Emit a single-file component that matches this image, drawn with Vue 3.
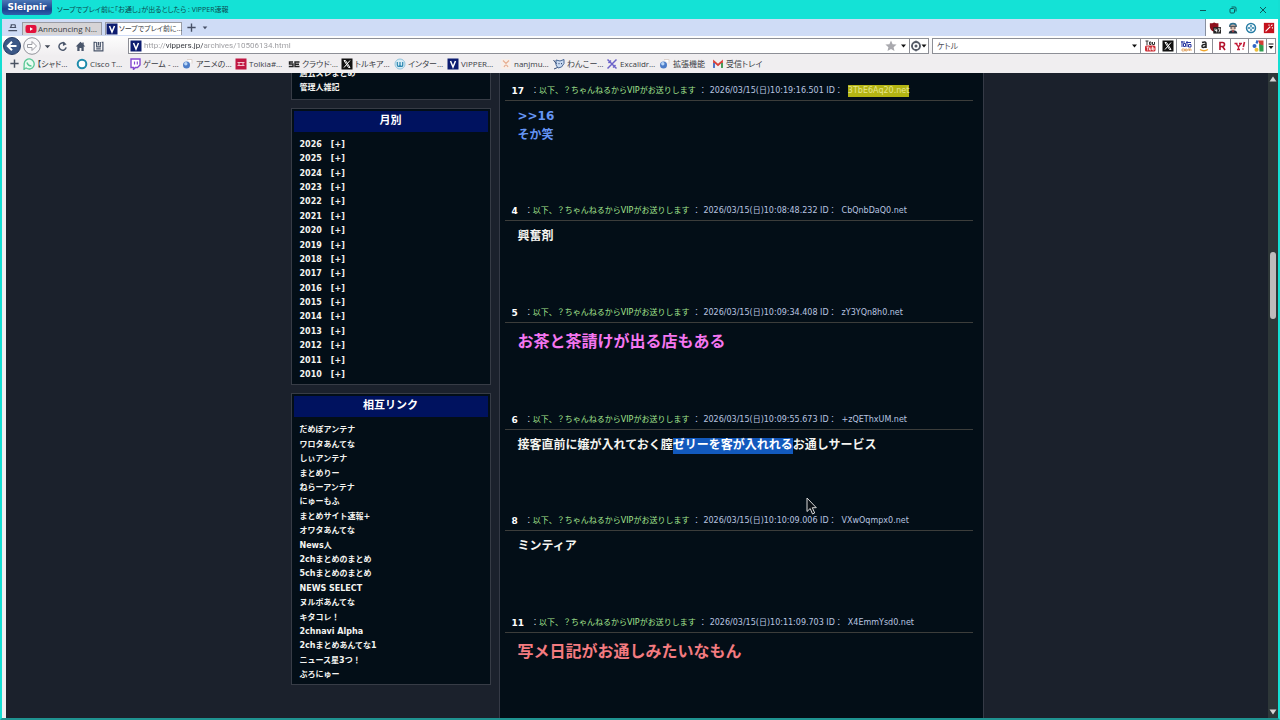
<script setup>
import { ref } from 'vue'

const url = ref('http://vippers.jp/archives/10506134.html')
const query = ref('ケトル')

const bookmarks = [
  { icon: 'line', text: '【シャド…' },
  { icon: 'ring', text: 'Cisco T…' },
  { icon: 'twitch', text: 'ゲーム - …' },
  { icon: 'orb', text: 'アニメの…' },
  { icon: 'tolkia', text: 'Tolkia#…' },
  { icon: 'se', text: 'クラウド·…' },
  { icon: 'x', text: 'トルキア…' },
  { icon: 'w', text: 'インター…' },
  { icon: 'v', text: 'VIPPER…' },
  { icon: 'nan', text: 'nanjmu…' },
  { icon: 'dog', text: 'わんこー…' },
  { icon: 'excali', text: 'Excalidr…' },
  { icon: 'orb', text: '拡張機能' },
  { icon: 'gmail', text: '受信トレイ' },
]

const years = Array.from({ length: 17 }, (_, i) => 2026 - i)

const links = [
  'だめぽアンテナ', 'ワロタあんてな', 'しぃアンテナ', 'まとめりー', 'ねらーアンテナ',
  'にゅーもふ', 'まとめサイト速報+', 'オワタあんてな', 'News人', '2chまとめのまとめ',
  '5chまとめのまとめ', 'NEWS SELECT', 'ヌルポあんてな', 'キタコレ！', '2chnavi Alpha',
  '2chまとめあんてな1', 'ニュース星3つ！', 'ぶろにゅー',
]

const posts = [
  { no: 17, time: '2026/03/15(日)10:19:16.501', id: '3TbE6Aq20.net', hit: true, tone: 'blue', lines: [['>>16'], ['そか笑']] },
  { no: 4, time: '2026/03/15(日)10:08:48.232', id: 'CbQnbDaQ0.net', tone: 'plain', lines: [['興奮剤']] },
  { no: 5, time: '2026/03/15(日)10:09:34.408', id: 'zY3YQn8h0.net', tone: 'pink', lines: [['お茶と茶請けが出る店もある']] },
  { no: 6, time: '2026/03/15(日)10:09:55.673', id: '+zQEThxUM.net', tone: 'plain', lines: [['接客直前に嬢が入れておく膣', 'ゼリーを客が入れれる', 'お通しサービス']] },
  { no: 8, time: '2026/03/15(日)10:10:09.006', id: 'VXwOqmpx0.net', tone: 'plain', lines: [['ミンティア']] },
  { no: 11, time: '2026/03/15(日)10:11:09.703', id: 'X4EmmYsd0.net', tone: 'salmon', lines: [['写メ日記がお通しみたいなもん']] },
]
</script>

<template>
  <div class="window">
    <header class="titlebar">
      <button class="brand">Sleipnir</button>
      <span class="title">ソープでプレイ前に「お通し」が出るとしたら : VIPPER速報</span>
      <div class="controls">
        <button aria-label="最小化"><svg viewBox="0 0 10 10"><path d="M2 5.5h6" /></svg></button>
        <button aria-label="元に戻す"><svg viewBox="0 0 10 10"><rect x="2" y="3.5" width="4.5" height="4.5" rx="1" /><path d="M3.5 2h3.5a1 1 0 0 1 1 1v3.500" /></svg></button>
        <button aria-label="閉じる"><svg viewBox="0 0 10 10"><path d="M2 2l6 6M8 2l-6 6" /></svg></button>
      </div>
    </header>

    <div class="tabrow">
      <nav class="tabs">
        <button class="tool" aria-label="タブ一覧"><svg viewBox="0 0 12 12"><path d="M4 3h5M3 6h7M1.500 9.500h9.500M5 3l-1 3M9 3v3" stroke="#475066" stroke-width="1.300" fill="none" /></svg></button>
        <button class="tab">
          <svg class="ico" viewBox="0 0 12 12"><rect x="0.500" y="2" width="11" height="8" rx="2" fill="#e3103c" /><path d="M5 4.300v3.400l3-1.700z" fill="#fff" /></svg>
          <span>Announcing N…</span>
        </button>
        <button class="tab active">
          <svg class="ico" viewBox="0 0 12 12"><rect x="0.500" y="0.500" width="11" height="11" fill="#0c1c70" /><path d="M3.500 3l2.500 6 2.500-6" stroke="#fff" stroke-width="1.500" fill="none" /></svg>
          <span>ソープでプレイ前に…</span>
        </button>
        <button class="tool" aria-label="新しいタブ"><svg viewBox="0 0 12 12"><path d="M6 1.500v9M1.500 6h9" stroke="#475066" stroke-width="1.500" /></svg></button>
        <button class="tool slim" aria-label="タブメニュー"><svg viewBox="0 0 8 12"><path d="M1.500 5h5l-2.500 3z" fill="#475066" /></svg></button>
      </nav>
      <div class="extensions">
        <button aria-label="ブロッカー"><svg viewBox="0 0 14 14"><path d="M1 1.500q3 0 5-1 2 1 5 1v4q0 4-5 6-5-2-5-6z" fill="#8d101d" /><rect x="5" y="6" width="9" height="7.500" fill="#222" /><path d="M7 7.500v2.500h2.500M9 8v4M10.500 8H13l-1.500 4" stroke="#fff" fill="none" /></svg></button>
        <button aria-label="プロフィール"><svg viewBox="0 0 14 14"><path d="M2.500 5q0-4 4.500-4t4.500 4z" fill="#2d6f8e" /><circle cx="7" cy="6.500" r="3.500" fill="#e6c3b2" /><path d="M2.500 5h9M4 7h2M8 7h2" stroke="#223442" stroke-width="1.300" /><path d="M2 13.500q0-4 5-4t5 4z" fill="#233442" /><path d="M5.500 10h3L7 12.500z" fill="#c44" /></svg></button>
        <button aria-label="ターゲット"><svg viewBox="0 0 14 14"><circle cx="7" cy="7" r="5.200" fill="#f4fbfe" stroke="#287da4" stroke-width="1.800" /><path d="M7 3.500v2.500M7 8v2.500M3.500 7h2.500M8 7h2.500" stroke="#287da4" stroke-width="1.600" /></svg></button>
        <button aria-label="マジック"><svg viewBox="0 0 14 14"><rect x="1" y="1" width="12" height="12" fill="#c4121d" /><path d="M3 11l5.500-5.500M9.500 4.500L11 3M7 3v1.500M11 6v1.500" stroke="#fff" stroke-width="1.300" /></svg></button>
      </div>
    </div>

    <div class="toolbar">
      <button class="back" aria-label="戻る"><svg viewBox="0 0 18 18"><circle cx="9" cy="9" r="8.500" fill="#3b5786" stroke="#263c64" /><path d="M13.500 9H5.500M9 4.800L4.800 9 9 13.200" stroke="#fff" stroke-width="2" fill="none" /></svg></button>
      <button class="back" aria-label="進む"><svg viewBox="0 0 18 18"><circle cx="9" cy="9" r="8.300" fill="#f8f8fa" stroke="#92939b" /><path d="M4.500 7.500h4.500V4.500L13.500 9 9 13.500v-3H4.500z" stroke="#9b9ca3" fill="#fff" /></svg></button>
      <button class="nav" aria-label="履歴"><svg viewBox="0 0 12 12"><path d="M3 4.500h6L6 8z" fill="#424956" /></svg></button>
      <button class="nav wide" aria-label="更新"><svg viewBox="0 0 12 12"><path d="M8.500 2.800A4 4 0 1 0 10 7" fill="none" stroke="#4a566b" stroke-width="1.600" /><path d="M6.500 0.500L10.500 3.500 6.500 5.500z" fill="#4a566b" /></svg></button>
      <button class="nav wide" aria-label="ホーム"><svg viewBox="0 0 12 12"><path d="M6 0.800L0.800 6h1.700v5h2.500V7.500h2V11h2.500V6h1.700L9.500 4.200V1.500H8v1.300z" fill="#4a566b" /></svg></button>
      <button class="nav wide" aria-label="ブックマークに追加"><svg viewBox="0 0 12 12"><path d="M3 1.500H1.200v9.300h9.600V1.500H9.500M4 1v5.500h4V1M6 1v4M3.500 8.500h5" fill="none" stroke="#4a566b" stroke-width="1.300" /></svg></button>

      <div class="address">
        <svg class="ico" viewBox="0 0 12 12"><rect x="0.500" y="0.500" width="11" height="11" fill="#0c1c70" /><path d="M3.500 3l2.500 6 2.500-6" stroke="#fff" stroke-width="1.500" fill="none" /></svg>
        <input v-model="url" type="text" aria-label="アドレス">
        <button aria-label="お気に入り"><svg viewBox="0 0 12 12"><path d="M6 0.500l1.600 3.700 4 .4-3 2.600.9 3.900L6 9.100l-3.500 2 .9-3.900-3-2.600 4-.4z" fill="#a9a9ae" /></svg></button>
        <button aria-label="アドレス履歴"><svg viewBox="0 0 12 12"><path d="M4 4.500h5L6.500 7.500z" fill="#111" /></svg></button>
        <button class="engine" aria-label="エンジン"><svg viewBox="0 0 18 12"><circle cx="6" cy="6" r="4" fill="none" stroke="#555b67" stroke-width="1.800" /><circle cx="6" cy="6" r="1.500" fill="#555b67" /><path d="M6 0.500v2M6 9.500v2M1 6h2M9 6h2" stroke="#555b67" /><path d="M11.500 4.500h5L14 7.500z" fill="#111" /></svg></button>
      </div>

      <div class="search">
        <input v-model="query" type="text" aria-label="検索">
        <button aria-label="検索履歴"><svg viewBox="0 0 12 12"><path d="M4 4.500h5L6.500 7.500z" fill="#111" /></svg></button>
        <button class="site" aria-label="YouTube"><svg viewBox="0 0 12 12"><path d="M1.500 1h3M3 1v4M5.500 2h1.500v2.500H5.500zM8.500 2v2.500H10.500V2" stroke="#333" fill="none" /><rect x="1" y="5.500" width="10.500" height="6" rx="1.500" fill="#cc2d35" /><path d="M2.500 7h2.500M3.700 7v3.500M5.500 7.500v2.500H7V7.500M8.500 6.500v3.500H10V8H8.500" stroke="#fff" stroke-width=".8" fill="none" /></svg></button>
        <button class="site" aria-label="X"><svg viewBox="0 0 12 12"><rect x="0.500" y="0.500" width="11" height="11" fill="#111" /><path d="M3 2.500h1.500l4.500 7H7.500zM9 2.500L3 9.500" stroke="#fff" fill="none" /></svg></button>
        <button class="site" aria-label="価格.com"><svg viewBox="0 0 12 12"><path d="M1 2h4M2 1v6M3.500 3.500h2v3h-2zM6 2.500h5M7 1v6M8.500 4.500H11V7H8.500z" stroke="#2936a0" fill="none" /><path d="M2 9h2.500v2H2zM5.500 9H7v2H5.500zM8 11V9h3v2M9.500 9v2" stroke="#dc9a57" stroke-width=".8" fill="none" /></svg></button>
        <button class="site" aria-label="Amazon"><svg viewBox="0 0 12 12"><path d="M4 2.500q4-1.500 4 1V8M8 4.300q-4 0-4 1.900 0 2.500 4 .2" stroke="#222" stroke-width="1.500" fill="none" /><path d="M2 9.500q4 2.500 8 0" stroke="#efa52c" stroke-width="1.300" fill="none" /></svg></button>
        <button class="site" aria-label="楽天"><svg viewBox="0 0 12 12"><path d="M4 10V2.500h2.500q2 0 2 2t-2 2H4M6.500 6.500L9 10" stroke="#b3122b" stroke-width="1.600" fill="none" /></svg></button>
        <button class="site" aria-label="Yahoo"><svg viewBox="0 0 12 12"><path d="M.5 3.500h3M5 3.500h3M2 3.500l2.500 3.500L7 3.500M4.500 7v2.500M3 9.500h3" stroke="#c41d3a" stroke-width="1.300" fill="none" /><path d="M10.500 2L9.300 7M9 8.500v1" stroke="#c41d3a" stroke-width="1.600" /></svg></button>
        <button class="site" aria-label="Google"><svg viewBox="0 0 12 12"><path d="M6 .5h5.500v5H8z" fill="#d23f35" /><path d="M7 4l4.500 1.500V11.500H7.500z" fill="#2d9c50" /><path d="M4.500 0l2 1-1 3-2-1z" fill="#2f66c6" /><circle cx="2.500" cy="6" r="2" fill="#2f66c6" /><circle cx="4.500" cy="9.700" r="2" fill="#edbe3c" /></svg></button>
        <button class="more" aria-label="その他"><svg viewBox="0 0 8 12"><path d="M1.500 4h5" stroke="#111" /><path d="M1.500 6h5L4 9z" fill="#111" /></svg></button>
      </div>
    </div>

    <nav class="bookmarks">
      <button class="add" aria-label="追加"><svg viewBox="0 0 12 12"><path d="M6 1.500v9M1.500 6h9" stroke="#4a5262" stroke-width="1.600" /></svg></button>
      <a v-for="b in bookmarks" :key="b.text" href="#">
        <svg class="ico" viewBox="0 0 12 12">
          <template v-if="b.icon === 'line'"><path d="M2 10.500L1 11.500 1.200 5.500a5 5 0 1 1 2 4.500z" fill="#e9fbf1" stroke="#59c795" stroke-width="1.300" /><path d="M4 4.500q1 3.500 4.500 3.500" stroke="#59c795" stroke-width="1.500" fill="none" /></template>
          <template v-else-if="b.icon === 'ring'"><circle cx="6" cy="6" r="4.300" fill="#fff" stroke="#1d8bab" stroke-width="2" /></template>
          <template v-else-if="b.icon === 'twitch'"><path d="M2 1h9v6L8.500 9.500H6.500L4.500 11.500v-2H2z" fill="#fff" stroke="#8347d0" stroke-width="1.400" /><path d="M5.500 3.500v3M8.300 3.500v3" stroke="#8347d0" stroke-width="1.200" /></template>
          <template v-else-if="b.icon === 'orb'"><path d="M5 1.500h5v4" fill="#fff" stroke="#ddd2cc" /><circle cx="4.500" cy="7" r="3.500" fill="#4b7cc8" /><circle cx="3.800" cy="5.800" r="1.700" fill="#b8d6f7" /></template>
          <template v-else-if="b.icon === 'tolkia'"><rect x="0.500" y="0.500" width="11" height="11" fill="#c01743" /><path d="M2.500 4.500h7M2.500 7.500h7M4 4.500v3M8 4.500v3" stroke="#f3c4d0" /></template>
          <template v-else-if="b.icon === 'se'"><path d="M5 4H1.500v2H5v2.500H.8M11.500 4H7v4.500h4.500M7 6.200h4" stroke="#222" stroke-width="1.400" fill="none" /></template>
          <template v-else-if="b.icon === 'x'"><rect x="0.500" y="0.500" width="11" height="11" fill="#111" /><path d="M3 2.500h1.500l4.500 7H7.500zM9 2.500L3 9.500" stroke="#fff" fill="none" /></template>
          <template v-else-if="b.icon === 'w'"><circle cx="6" cy="6" r="5" fill="#d8edf6" stroke="#92c4dd" /><path d="M3.300 4v3q0 1.300 1.300 1.300T6 7V4v3q0 1.300 1.400 1.300T8.700 7V4" stroke="#2d87b0" stroke-width="1.200" fill="none" /></template>
          <template v-else-if="b.icon === 'v'"><rect x="0.500" y="0.500" width="11" height="11" fill="#0c1c70" /><path d="M3.500 3l2.500 6 2.500-6" stroke="#fff" stroke-width="1.500" fill="none" /></template>
          <template v-else-if="b.icon === 'nan'"><rect x="1" y="1" width="10" height="10" fill="#f8eee8" /><path d="M3 2.500l3 3 3-3M4 9q2-4 4 0" stroke="#e7ae91" stroke-width="1.200" fill="none" /></template>
          <template v-else-if="b.icon === 'dog'"><path d="M3 2l4 1 4-1.500v4L8.500 9 5 10 3 7z" fill="#c9daf1" stroke="#486795" /><path d="M6 5v1.200M8.500 5v1.200M.5 2l3 4M1 11l3.500-1.500" stroke="#364e79" /></template>
          <template v-else-if="b.icon === 'excali'"><path d="M1.500 1.500l9 9M10.500 1.500l-9 9M2.500 5L5 2.500M7 9.500L9.500 7" stroke="#6b62c9" stroke-width="1.500" /></template>
          <template v-else><path d="M2 9.500V3.500l4 3.500 4-3.500v6" fill="none" stroke="#d9423a" stroke-width="1.800" /><path d="M2 10V5" stroke="#4279d4" stroke-width="1.800" /><path d="M10 10V5" stroke="#37a45a" stroke-width="1.800" /></template>
        </svg>
        <span>{{ b.text }}</span>
      </a>
    </nav>

    <div class="viewport">
      <div class="page">
        <aside>
          <section class="box first">
            <ul>
              <li><a href="#">過去スレまとめ</a></li>
              <li><a href="#">管理人雑記</a></li>
            </ul>
          </section>
          <section class="box">
            <h2>月別</h2>
            <ul>
              <li v-for="y in years" :key="y"><a href="#">{{ y }}</a><button class="expand">[+]</button></li>
            </ul>
          </section>
          <section class="box">
            <h2>相互リンク</h2>
            <ul>
              <li v-for="l in links" :key="l"><a href="#">{{ l }}</a></li>
            </ul>
          </section>
        </aside>
        <main>
          <article v-for="p in posts" :key="p.no">
            <header>
              <b>{{ p.no }}</b>
              <span class="author"><i>：</i>以下、？ちゃんねるからVIPがお送りします</span>
              <span class="sep">：</span>
              <span>{{ p.time }} ID：</span>
              <span class="uid" :class="{ hit: p.hit }">{{ p.id }}</span>
            </header>
            <div class="body" :class="p.tone">
              <p v-for="(line, i) in p.lines" :key="i"><template v-for="(part, j) in line" :key="j"><mark v-if="j === 1">{{ part }}</mark><template v-else>{{ part }}</template></template></p>
            </div>
          </article>
        </main>
      </div>
      <div class="scrollbar">
        <svg viewBox="0 0 8 6"><path d="M4 0.500L7.500 5.500h-7z" fill="#d4d4d4" /></svg>
        <div class="thumb"></div>
        <svg viewBox="0 0 8 6"><path d="M4 5.500L7.500 0.500h-7z" fill="#d4d4d4" /></svg>
      </div>
    </div>
    <svg class="pointer" viewBox="0 0 11 18"><path d="M1 1v13.500l3.200-3 2.300 5.500 2.200-1-2.400-5.300H10.300z" fill="#0a0f14" stroke="#d8d8d8" /></svg>
  </div>
</template>

<style>
body {
  background: #1b212c;
}
</style>

<style scoped>
* {
  box-sizing: border-box;
}
.window {
  position: relative;
  display: flex;
  flex-direction: column;
  height: 100vh;
  overflow: hidden;
  border: solid #14dfd3;
  border-width: 0 2px;
  border-bottom: 2px solid #1f9290;
  background: #f0eef0;
  color: #3a3d45;
  font-family: "Open Sans", "Noto Sans CJK JP", sans-serif;
  font-size: 8px;
  line-height: 12px;
}
button {
  margin: 0;
  padding: 0;
  border: 0;
  background: none;
  color: inherit;
  font: inherit;
  display: flex;
  align-items: center;
  justify-content: center;
}
svg {
  display: block;
  flex: none;
}
a {
  color: inherit;
  text-decoration: none;
}
.ico {
  width: 12px;
  height: 12px;
}
.titlebar {
  display: flex;
  align-items: center;
  height: 19px;
  background: #14e2d6;
}
.brand {
  align-self: flex-start;
  width: 50px;
  height: 15px;
  border-radius: 0 0 4px 4px;
  background: linear-gradient(#4c78b8, #1b428c 60%, #2e62ae);
  color: #fff;
  font: bold 9px/15px "DejaVu Sans", sans-serif;
}
.title {
  flex: 1;
  margin-left: 5px;
  color: #0b4b50;
  font-size: 7px;
  font-feature-settings: "palt";
  white-space: nowrap;
}
.controls {
  display: flex;
}
.controls button {
  width: 30px;
  height: 18px;
}
.controls svg {
  width: 10px;
  height: 10px;
  fill: none;
  stroke: #0d5a5c;
}
.tabrow {
  display: flex;
  height: 17px;
}
.tabs {
  flex: 1;
  display: flex;
  align-items: center;
  padding-left: 2px;
  background: #cfdcf6;
  border-right: 1px solid #8890a0;
}
.tool {
  width: 17px;
  height: 15px;
}
.tool svg {
  width: 11px;
  height: 11px;
}
.tool.slim {
  width: 10px;
}
.tool.slim svg {
  width: 8px;
}
.tab {
  justify-content: flex-start;
  gap: 1px;
  width: 80px;
  height: 13px;
  margin: 2px 3px 0 1px;
  padding: 0 2px;
  border: 1px solid #9a9ca4;
  border-bottom: 0;
  background: #d6d4d6;
  white-space: nowrap;
}
.tab.active {
  width: 77px;
  margin: 2px 1px 0 0;
  padding: 0;
  background: #fff;
  font-size: 7px;
  font-feature-settings: "palt";
}
.extensions {
  display: flex;
  align-items: center;
  justify-content: space-around;
  width: 72px;
  background: #fff;
}
.extensions svg {
  width: 12px;
  height: 12px;
}
.toolbar {
  display: flex;
  align-items: center;
  height: 20px;
  padding: 0 2px 0 1px;
  background: linear-gradient(#fdfdfd, #f0eef0);
}
.back svg {
  width: 18px;
  height: 18px;
}
.back + .back {
  margin-left: 2px;
}
.nav {
  width: 12px;
}
.nav svg {
  width: 11px;
  height: 11px;
}
.nav.wide {
  width: 18px;
}
.address,
.search {
  display: flex;
  align-items: center;
  height: 16px;
  border: 1px solid #8d8f96;
  background: #fff;
}
.address {
  flex: 1;
  margin-left: 21px;
  padding-left: 1px;
}
input {
  flex: 1;
  min-width: 0;
  width: 0;
  height: 14px;
  padding: 0 4px;
  border: 0;
  outline: 0;
  background: none;
  color: #50535a;
  font: 8px/14px "Open Sans", "Noto Sans CJK JP", sans-serif;
}
.search input {
  font-feature-settings: "palt";
}
.address input {
  padding: 0 2px;
  font-family: Roboto, sans-serif;
  background: linear-gradient(90deg, #98989c 24px, #303339 24px, #303339 61px, #98989c 61px);
  background-clip: text;
  -webkit-background-clip: text;
  -webkit-text-fill-color: transparent;
}
.address button svg,
.search button svg {
  width: 12px;
  height: 12px;
}
.address .engine {
  height: 14px;
  border-left: 1px solid #8d8f96;
}
.address .engine svg {
  width: 18px;
}
.search {
  width: 344px;
  margin-left: 3px;
}
.search .site {
  width: 18px;
  height: 14px;
  border-left: 1px solid #8d8f96;
}
.search .more {
  width: 9px;
  height: 14px;
  border-left: 1px solid #8d8f96;
}
.search .more svg {
  width: 8px;
}
.bookmarks {
  display: flex;
  align-items: center;
  height: 17px;
  padding: 0 0 2px 3px;
}
.add svg {
  width: 11px;
  height: 11px;
}
.add {
  width: 18px;
}
.bookmarks a {
  display: flex;
  align-items: center;
  gap: 2px;
  width: 53px;
  white-space: nowrap;
  font-feature-settings: "palt";
}
.viewport {
  flex: 1;
  display: flex;
  min-height: 0;
  overflow: hidden;
  margin-left: 4px;
  background: #1b212c;
}
.page {
  flex: 1;
  display: flex;
  justify-content: center;
  align-items: flex-start;
  gap: 8px;
  color: #f4f4f0;
  font-family: "DejaVu Sans", "Noto Sans CJK JP", sans-serif;
}
aside {
  width: 200px;
  margin-top: -9px;
}
.box {
  margin-bottom: 8px;
  padding: 2px;
  border: 1px solid #373c46;
  background: #030e17;
}
.box h2 {
  margin: 0;
  height: 21px;
  background: #00125f;
  color: #fff;
  font-size: 11px;
  line-height: 20px;
  text-align: center;
}
.box ul {
  margin: 0;
  padding: 6px 6px 0;
  list-style: none;
  font-weight: bold;
  line-height: 1.8;
}
.box.first ul {
  padding: 0 6px 1px;
}
.box li {
  display: flex;
  gap: 9px;
  height: 1.8em;
  white-space: nowrap;
}
main {
  width: 485px;
  height: 100%;
  padding: 10px 10px 0 5px;
  border: solid #353a46;
  border-width: 0 1px;
  background: #030e17;
}
article {
  padding-bottom: 58px;
}
article header {
  display: flex;
  height: 18px;
  padding-left: 7px;
  border-bottom: 1px solid #3c3d3b;
  color: #b9c5e0;
  line-height: 16px;
  white-space: nowrap;
}
article header b {
  margin-right: 7px;
  color: #fff;
  font-size: 9px;
}
.author {
  color: #a3e58f;
}
.author i {
  color: #c6cfdc;
  font-style: normal;
}
.sep {
  margin: 0 3px;
}
.uid {
  align-self: flex-start;
  margin: 2px 0 0 5px;
  line-height: 12px;
}
.uid.hit {
  background: #b3b413;
  color: #e6e68f;
}
.body {
  padding: 6px 13px 0;
  font-size: 12px;
  font-weight: bold;
  line-height: 1.6;
}
.body p {
  margin: 0;
  height: 1.6em;
}
.blue {
  color: #6494f5;
}
.pink {
  color: #f576f0;
  font-size: 16px;
}
.salmon {
  color: #f37b80;
  font-size: 16px;
}
mark {
  padding-bottom: 2px;
  background: #1259bd;
  color: #fff;
}
.scrollbar {
  display: flex;
  flex-direction: column;
  align-items: center;
  width: 10px;
  padding: 3px 0;
  background: #2e3738;
}
.scrollbar svg {
  width: 8px;
  height: 6px;
}
.thumb {
  width: 6px;
  height: 67px;
  margin: 170px 0 auto;
  border-radius: 3px;
  background: #bdbcbc;
}
.pointer {
  position: absolute;
  left: 804px;
  top: 497px;
  width: 11px;
  height: 18px;
}
</style>
